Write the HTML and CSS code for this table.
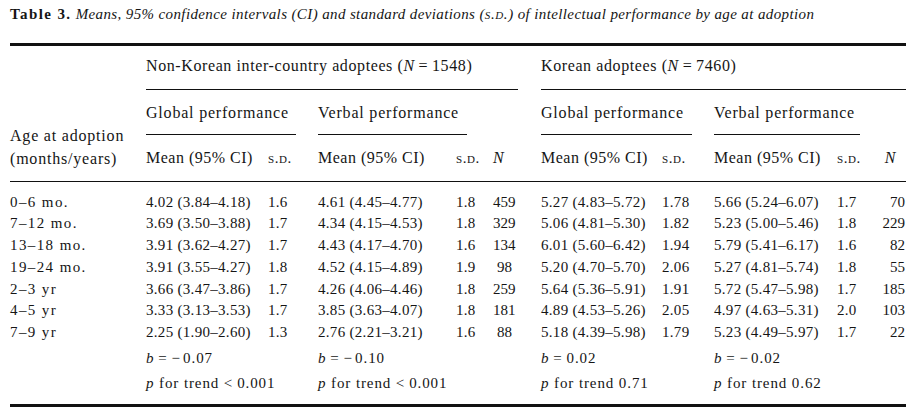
FILE: index.html
```html
<!DOCTYPE html>
<html lang="en">
<head>
<meta charset="utf-8">
<title>Table 3</title>
<link rel="stylesheet" href="styles.css">
</head>
<body>
<div class="page">
  <p class="caption"><b>Table 3.</b> <i>Means, 95% confidence intervals (CI) and standard deviations (<span class="sc">s.d.</span>) of intellectual performance by age at adoption</i></p>
  <div class="rule thick"></div>
  <div class="grid">
    <div class="h grp g1">Non-Korean inter-country adoptees (<i>N</i>&#8201;=&#8201;1548)</div>
    <div class="h grp g2">Korean adoptees (<i>N</i>&#8201;=&#8201;7460)</div>
    <div class="line l-g1"></div>
    <div class="line l-g2"></div>

    <div class="h sub s1">Global performance</div>
    <div class="h sub s2">Verbal performance</div>
    <div class="h sub s3">Global performance</div>
    <div class="h sub s4">Verbal performance</div>
    <div class="line l-s1"></div>
    <div class="line l-s2"></div>
    <div class="line l-s3"></div>
    <div class="line l-s4"></div>

    <div class="h age">Age at adoption<br>(months/years)</div>
    <div class="h m c2">Mean (95% CI)</div>
    <div class="h m c3"><span class="sc">s.d.</span></div>
    <div class="h m c4">Mean (95% CI)</div>
    <div class="h m c5"><span class="sc">s.d.</span></div>
    <div class="h m c6 nh"><i>N</i></div>
    <div class="h m c8">Mean (95% CI)</div>
    <div class="h m c9"><span class="sc">s.d.</span></div>
    <div class="h m c10">Mean (95% CI)</div>
    <div class="h m c11"><span class="sc">s.d.</span></div>
    <div class="h m c12 nh"><i>N</i></div>
    <div class="line l-all"></div>
  </div>
  <div class="grid body">
    <div class="first c1">0–6 mo.</div><div class="first c2">4.02 (3.84–4.18)</div><div class="first c3">1.6</div><div class="first c4">4.61 (4.45–4.77)</div><div class="first c5">1.8</div><div class="first c6 n">459</div><div class="first c8">5.27 (4.83–5.72)</div><div class="first c9">1.78</div><div class="first c10">5.66 (5.24–6.07)</div><div class="first c11">1.7</div><div class="first c12 n">70</div>
    <div class="c1">7–12 mo.</div><div class="c2">3.69 (3.50–3.88)</div><div class="c3">1.7</div><div class="c4">4.34 (4.15–4.53)</div><div class="c5">1.8</div><div class="c6 n">329</div><div class="c8">5.06 (4.81–5.30)</div><div class="c9">1.82</div><div class="c10">5.23 (5.00–5.46)</div><div class="c11">1.8</div><div class="c12 n">229</div>
    <div class="c1">13–18 mo.</div><div class="c2">3.91 (3.62–4.27)</div><div class="c3">1.7</div><div class="c4">4.43 (4.17–4.70)</div><div class="c5">1.6</div><div class="c6 n">134</div><div class="c8">6.01 (5.60–6.42)</div><div class="c9">1.94</div><div class="c10">5.79 (5.41–6.17)</div><div class="c11">1.6</div><div class="c12 n">82</div>
    <div class="c1">19–24 mo.</div><div class="c2">3.91 (3.55–4.27)</div><div class="c3">1.8</div><div class="c4">4.52 (4.15–4.89)</div><div class="c5">1.9</div><div class="c6 n">98</div><div class="c8">5.20 (4.70–5.70)</div><div class="c9">2.06</div><div class="c10">5.27 (4.81–5.74)</div><div class="c11">1.8</div><div class="c12 n">55</div>
    <div class="c1">2–3 yr</div><div class="c2">3.66 (3.47–3.86)</div><div class="c3">1.7</div><div class="c4">4.26 (4.06–4.46)</div><div class="c5">1.8</div><div class="c6 n">259</div><div class="c8">5.64 (5.36–5.91)</div><div class="c9">1.91</div><div class="c10">5.72 (5.47–5.98)</div><div class="c11">1.7</div><div class="c12 n">185</div>
    <div class="c1">4–5 yr</div><div class="c2">3.33 (3.13–3.53)</div><div class="c3">1.7</div><div class="c4">3.85 (3.63–4.07)</div><div class="c5">1.8</div><div class="c6 n">181</div><div class="c8">4.89 (4.53–5.26)</div><div class="c9">2.05</div><div class="c10">4.97 (4.63–5.31)</div><div class="c11">2.0</div><div class="c12 n">103</div>
    <div class="c1">7–9 yr</div><div class="c2">2.25 (1.90–2.60)</div><div class="c3">1.3</div><div class="c4">2.76 (2.21–3.21)</div><div class="c5">1.6</div><div class="c6 n">88</div><div class="c8">5.18 (4.39–5.98)</div><div class="c9">1.79</div><div class="c10">5.23 (4.49–5.97)</div><div class="c11">1.7</div><div class="c12 n">22</div>

    <div class="tr t1 c2s"><i>b</i>&#8201;=&#8201;−&#8202;0.07</div><div class="tr t1 c4s"><i>b</i>&#8201;=&#8201;−&#8202;0.10</div><div class="tr t1 c8s"><i>b</i>&#8201;=&#8201;0.02</div><div class="tr t1 c10s"><i>b</i>&#8201;=&#8201;−&#8202;0.02</div>
    <div class="tr t2 c2s"><i>p</i> for trend &lt;&#8201;0.001</div><div class="tr t2 c4s"><i>p</i> for trend &lt;&#8201;0.001</div><div class="tr t2 c8s"><i>p</i> for trend 0.71</div><div class="tr t2 c10s"><i>p</i> for trend 0.62</div>
  </div>
  <div class="rule thick bottom"></div>
</div>
</body>
</html>
```

FILE: styles.css
```css
html, body {
  margin: 0;
  padding: 0;
  background: #ffffff;
}
body {
  font-family: "Liberation Serif", "Times New Roman", serif;
  color: #151515;
  font-size: 15px;
}
.page {
  padding: 4px 11px 0 10px;
}
.caption {
  margin: 0;
  font-size: 15px;
  line-height: 20px;
  white-space: nowrap;
  letter-spacing: 0.38px;
}
.caption b {
  letter-spacing: 1.4px;
}
.sc {
  font-variant: small-caps;
  text-transform: lowercase;
  font-size: 15px;
  letter-spacing: 0.6px;
}
.rule {
  background: #111;
}
.rule.thick {
  height: 2.5px;
  margin-top: 19px;
}
.rule.bottom {
  margin-top: 8px;
}
.grid {
  display: grid;
  grid-template-columns: 136px 122px 50px 138px 37px 20px 28px 121px 52px 123px 45px 24px;
  white-space: nowrap;
}
.h {
  line-height: 23px;
  font-size: 16px;
}
.grp { padding-top: 8px; letter-spacing: 0.6px; }
.g1 { grid-column: 2 / 7; grid-row: 1; }
.g2 { grid-column: 8 / 13; grid-row: 1; }
.line {
  height: 1px;
  background: #111;
  align-self: start;
}
.l-g1 { grid-row: 2; grid-column: 2 / 7; margin-right: -5px; margin-top: 12px; }
.l-g2 { grid-row: 2; grid-column: 8 / 13; margin-top: 12px; }
.sub { grid-row: 3; padding-top: 11px; letter-spacing: 0.8px; }
.s1 { grid-column: 2 / 4; }
.s2 { grid-column: 4 / 6; }
.s3 { grid-column: 8 / 10; }
.s4 { grid-column: 10 / 12; }
.l-s1, .l-s2, .l-s3, .l-s4 { grid-row: 4; margin-top: 10px; }
.l-s1 { grid-column: 2 / 4; margin-right: 22px; }
.l-s2 { grid-column: 4 / 7; margin-right: 46px; }
.l-s3 { grid-column: 8 / 10; margin-right: 22px; }
.l-s4 { grid-column: 10 / 13; margin-right: 46px; }
.age { grid-column: 1; grid-row: 4 / 6; align-self: end; letter-spacing: 0.8px; margin-bottom: 1px; }
.m { grid-row: 5; padding-top: 10px; letter-spacing: 0.5px; }
.l-all { grid-row: 6; grid-column: 1 / 13; margin-top: 10px; }
.c1 { grid-column: 1; }
.c2 { grid-column: 2; }
.c3 { grid-column: 3; }
.c4 { grid-column: 4; }
.c5 { grid-column: 5; }
.c6 { grid-column: 6; }
.c8 { grid-column: 8; }
.c9 { grid-column: 9; }
.c10 { grid-column: 10; }
.c11 { grid-column: 11; }
.c12 { grid-column: 12; }
.c2s { grid-column: 2 / 4; }
.c4s { grid-column: 4 / 7; }
.c8s { grid-column: 8 / 10; }
.c10s { grid-column: 10 / 13; }
.nh { padding-right: 10px; text-align: right; }
.body > div {
  line-height: 21.8px;
  letter-spacing: 0.3px;
}
.body > .n {
  text-align: right;
  letter-spacing: 0;
  padding-right: 1px;
}
.body > .c1 {
  letter-spacing: 1.4px;
}
.body .first {
  padding-top: 10px;
}
.body > .tr {
  line-height: 25px;
  letter-spacing: 0.9px;
}
.body .t1 {
  padding-top: 2px;
}
```
